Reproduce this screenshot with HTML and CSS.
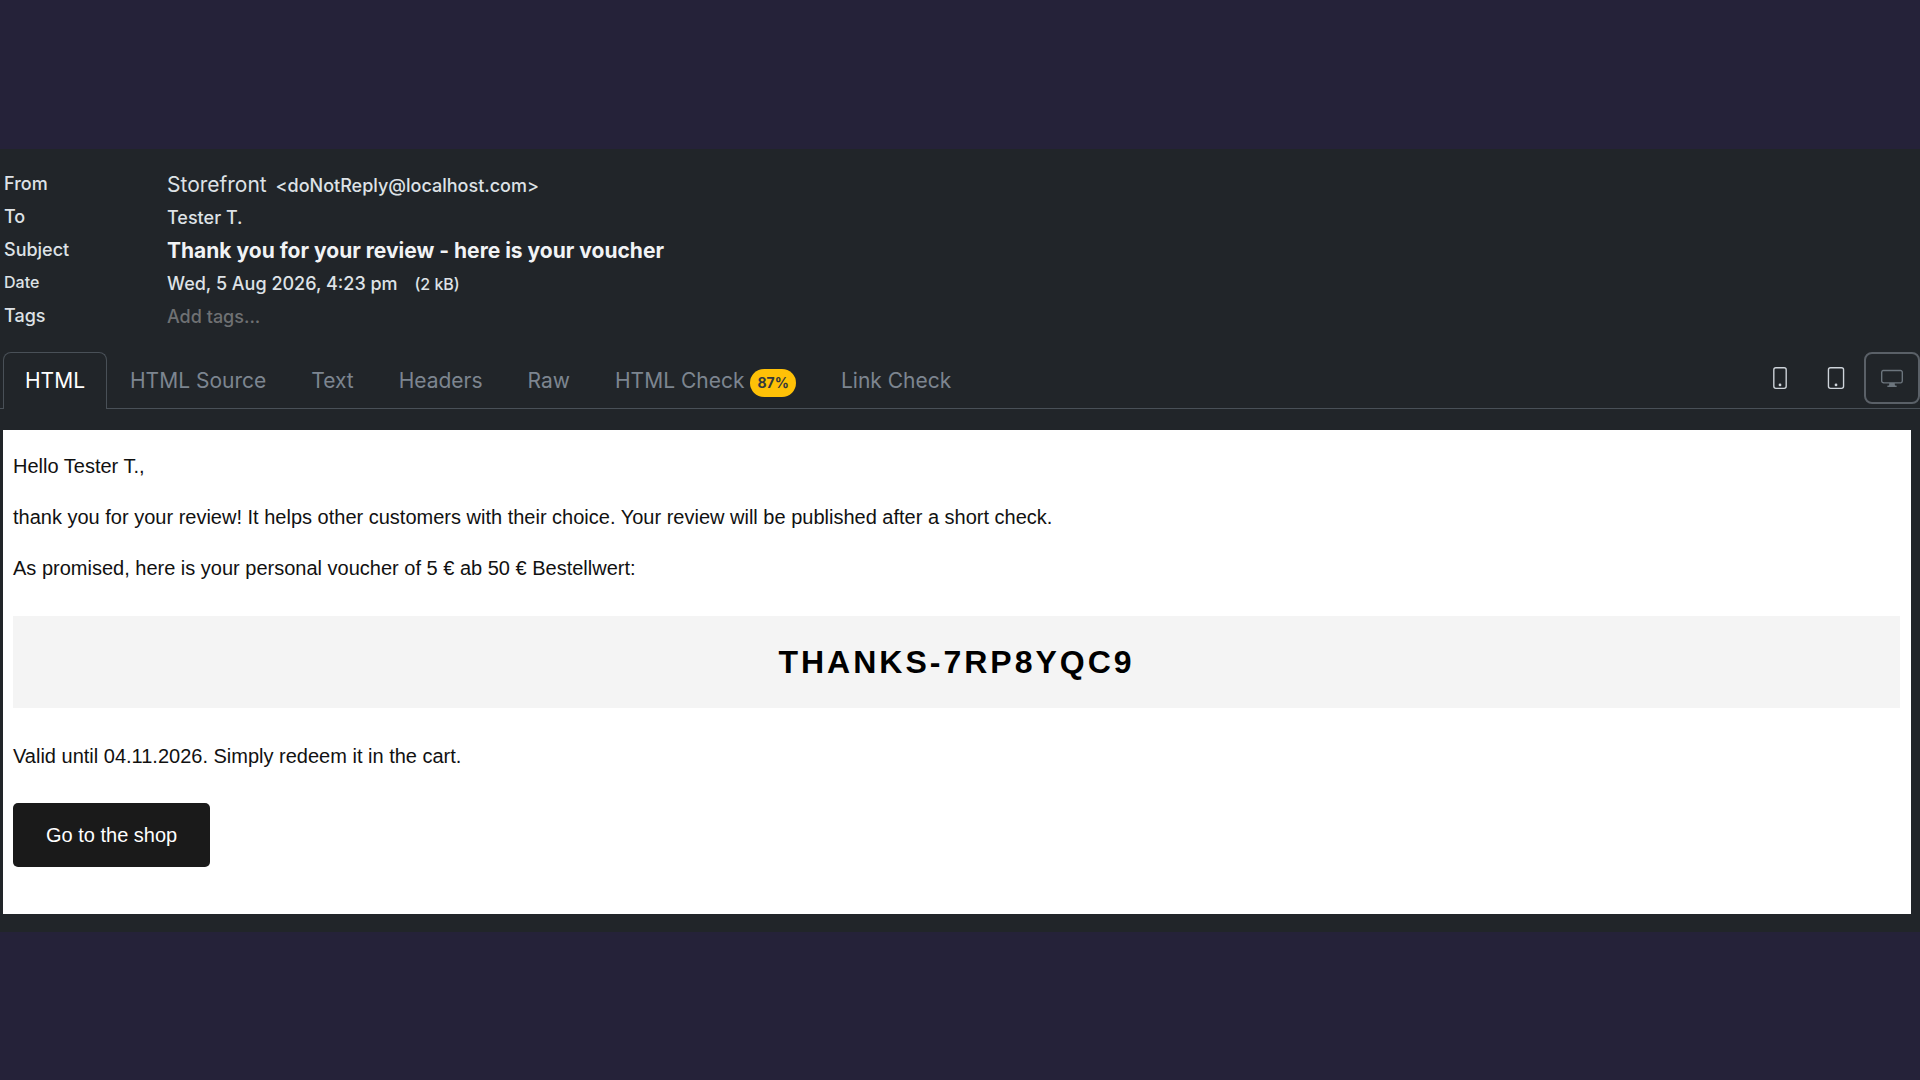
FILE: index.html
```html
<!DOCTYPE html>
<html lang="en">
<head>
    <meta charset="UTF-8">
    <title>Thank you for your review - here is your voucher</title>
    <link rel="stylesheet" href="styles.css">
</head>
<body>
<main class="viewer">
    <table class="headers">
        <tr>
            <th scope="row">From</th>
            <td><span class="name">Storefront</span> <span class="address">&lt;doNotReply@localhost.com&gt;</span></td>
        </tr>
        <tr>
            <th scope="row">To</th>
            <td>Tester T.</td>
        </tr>
        <tr>
            <th scope="row">Subject</th>
            <td><strong>Thank you for your review - here is your voucher</strong></td>
        </tr>
        <tr>
            <th scope="row" class="small">Date</th>
            <td>Wed, 5 Aug 2026, 4:23 pm <small>(2 kB)</small></td>
        </tr>
        <tr>
            <th scope="row"><label for="tags">Tags</label></th>
            <td><input type="text" id="tags" placeholder="Add tags..."></td>
        </tr>
    </table>

    <nav class="tabs">
        <button type="button" class="tab active">HTML</button>
        <button type="button" class="tab">HTML Source</button>
        <button type="button" class="tab">Text</button>
        <button type="button" class="tab">Headers</button>
        <button type="button" class="tab">Raw</button>
        <button type="button" class="tab">HTML Check <span class="badge">87%</span></button>
        <button type="button" class="tab">Link Check</button>

        <div class="devices">
            <button type="button" class="device" aria-label="Phone">
                <svg viewBox="0 0 16 16"><path d="M11 1a1 1 0 0 1 1 1v12a1 1 0 0 1-1 1H5a1 1 0 0 1-1-1V2a1 1 0 0 1 1-1zM5 0a2 2 0 0 0-2 2v12a2 2 0 0 0 2 2h6a2 2 0 0 0 2-2V2a2 2 0 0 0-2-2z"/><path d="M8 14a1 1 0 1 0 0-2 1 1 0 0 0 0 2"/></svg>
            </button>
            <button type="button" class="device" aria-label="Tablet">
                <svg viewBox="0 0 16 16"><path d="M12 1a1 1 0 0 1 1 1v12a1 1 0 0 1-1 1H4a1 1 0 0 1-1-1V2a1 1 0 0 1 1-1zM4 0a2 2 0 0 0-2 2v12a2 2 0 0 0 2 2h8a2 2 0 0 0 2-2V2a2 2 0 0 0-2-2z"/><path d="M8 14a1 1 0 1 0 0-2 1 1 0 0 0 0 2"/></svg>
            </button>
            <button type="button" class="device current" aria-label="Desktop">
                <svg viewBox="0 0 16 16"><path d="M0 4s0-2 2-2h12s2 0 2 2v6s0 2-2 2h-4q0 1 .25 1.5H11a.5.5 0 0 1 0 1H5a.5.5 0 0 1 0-1h.75Q6 13 6 12H2s-2 0-2-2zm1.398-.855a.76.76 0 0 0-.254.302A1.5 1.5 0 0 0 1 4.01V10c0 .325.078.502.145.602q.105.156.302.254a1.5 1.5 0 0 0 .538.143L2.01 11H14c.325 0 .502-.078.602-.145a.76.76 0 0 0 .254-.302 1.5 1.5 0 0 0 .143-.538L15 9.99V4c0-.325-.078-.502-.145-.602a.76.76 0 0 0-.302-.254A1.5 1.5 0 0 0 13.99 3H2c-.325 0-.502.078-.602.145"/></svg>
            </button>
        </div>
    </nav>

    <article class="mail">
        <p>Hello Tester T.,</p>
        <p>thank you for your review! It helps other customers with their choice. Your review will be published after a short check.</p>
        <p>As promised, here is your personal voucher of 5 € ab 50 € Bestellwert:</p>
        <div class="code">THANKS-7RP8YQC9</div>
        <p>Valid until 04.11.2026. Simply redeem it in the cart.</p>
        <a class="shop" href="#">Go to the shop</a>
    </article>
</main>
</body>
</html>
```
FILE: styles.css
```css
*{margin: 0; padding: 0; box-sizing: border-box}

body{
    min-height: 100vh;
    display: flex;
    flex-direction: column;
    justify-content: center;
    background: #252239;
    color: #dee2e6;
    font-family: Inter, "Liberation Sans", sans-serif;
}
button, input{
    font: inherit;
    color: inherit;
    background: none;
    border: 0;
}
.viewer{
    padding: 18px 0;
    background: #212529;
}

/* message headers */
.headers{
    width: 100%;
    border-collapse: collapse;
    font-size: 18px;
    font-weight: 500;
}
.headers tr{
    height: 33px;
}
.headers th{
    width: 167px;
    padding-left: 4px;
    font-weight: 500;
    text-align: left;
}
.headers td{
    padding-top: 2px;
}
.headers .small{
    font-size: 16px;
}
.headers .name{
    margin-right: 4px;
    font-size: 21px;
    font-weight: 400;
}
.headers strong{
    font-size: 21px;
    font-weight: 700;
    color: #f1f3f5;
}
.headers small{
    margin-left: 12px;
    font-size: 16px;
}
.headers input{
    display: block;
    width: 100%;
}
.headers input::placeholder{
    color: #6f7173;
    opacity: 1;
}

/* tabs */
.tabs{
    display: flex;
    gap: 1px;
    height: 57px;
    margin-top: 20px;
    padding-left: 3px;
    border-bottom: 1px solid #495057;
}
.tab{
    display: flex;
    align-items: center;
    gap: 6px;
    height: 57px;
    padding: 0 21px;
    border: 1px solid transparent;
    border-bottom: 0;
    border-radius: 8px 8px 0 0;
    font-size: 21px;
    color: #7d8590;
    white-space: nowrap;
}
.tab.active{
    border-color: #495057;
    background: #212529;
    color: #fff;
}
.badge{
    margin-top: 4px;
    padding: 0 7px;
    border-radius: 14px;
    background: #ffc107;
    color: #34383c;
    font-size: 14px;
    font-weight: 700;
    line-height: 28px;
}
.devices{
    display: flex;
    margin-left: auto;
}
.device{
    display: flex;
    align-items: center;
    justify-content: center;
    width: 56px;
    height: 52px;
    border-radius: 8px;
    color: #ced4da;
}
.device.current{
    border: 2px solid #5a6067;
    color: #6c757d;
}
.device svg{
    width: 22px;
    height: 22px;
    fill: currentColor;
}

/* mail body */
.mail{
    margin: 21px 9px 0 3px;
    padding: 21px 11px 47px 10px;
    background: #fff;
    color: #111;
    font-family: "Liberation Sans", Arial, sans-serif;
    font-size: 20px;
    line-height: 31px;
}
.mail p + p{
    margin-top: 20px;
}
.code{
    margin: 32px 0 33px;
    background: #f4f4f4;
    color: #000;
    font-size: 32px;
    font-weight: 700;
    line-height: 92px;
    letter-spacing: 3px;
    text-align: center;
}
.shop{
    display: block;
    width: fit-content;
    margin-top: 31px;
    padding: 0 33px;
    border-radius: 5px;
    background: #1a1a1a;
    color: #fff;
    line-height: 64px;
    text-decoration: none;
}
```
